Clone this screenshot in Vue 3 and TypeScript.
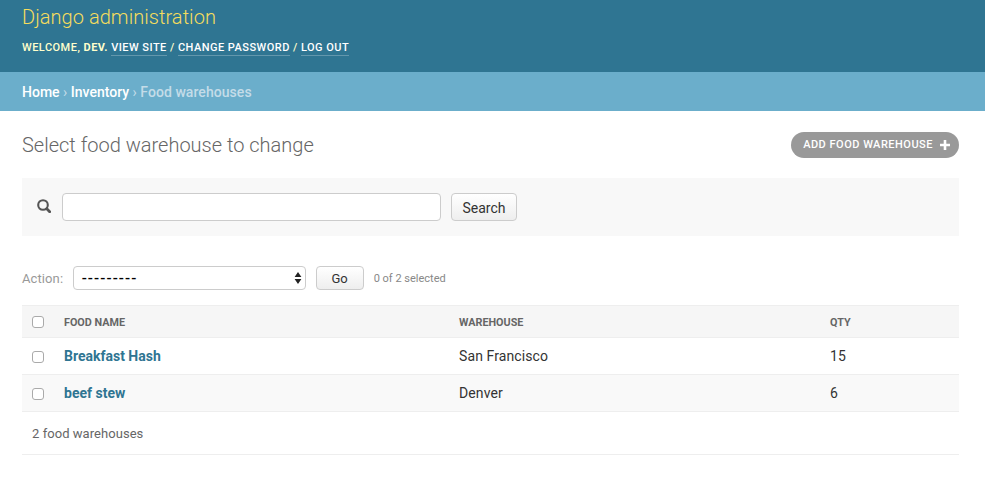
<script setup lang="ts">
interface Warehouse {
  name: string
  warehouse: string
  qty: number
}

const rows: Warehouse[] = [
  { name: 'Breakfast Hash', warehouse: 'San Francisco', qty: 15 },
  { name: 'beef stew', warehouse: 'Denver', qty: 6 },
]
</script>

<template>
  <div class="page">
    <header class="header">
      <h1 class="brand">Django administration</h1>
      <div class="tools">
        WELCOME, <strong>DEV.</strong>&nbsp;<a class="tool-link">VIEW SITE</a> / <a class="tool-link">CHANGE PASSWORD</a> / <a class="tool-link">LOG OUT</a>
      </div>
    </header>
    <nav class="crumbs">
      <a>Home</a> <span class="sep">›</span> <a>Inventory</a> <span class="sep">›</span> <span class="current">Food warehouses</span>
    </nav>
    <main class="content">
      <div class="title-row">
        <h2>Select food warehouse to change</h2>
        <a class="add-btn">
          ADD FOOD WAREHOUSE
          <svg width="10" height="10" viewBox="0 0 10 10"><path d="M3.7 0h2.6v3.7H10v2.6H6.3V10H3.7V6.3H0V3.7h3.7z" fill="#fff" /></svg>
        </a>
      </div>
      <div class="search-bar">
        <svg class="search-icon" width="14" height="14" viewBox="0 0 14 14">
          <circle cx="6" cy="6" r="4.8" fill="none" stroke="#555" stroke-width="2.1" />
          <path d="M9.8 9.8l2.9 2.9" stroke="#555" stroke-width="2.8" stroke-linecap="round" />
        </svg>
        <input class="search-input" type="text" />
        <button class="btn search-btn">Search</button>
      </div>
      <div class="actions">
        <label>Action:</label>
        <div class="select">
          <span>---------</span>
          <svg width="8" height="14" viewBox="0 0 8 14"><path d="M4 1l3.4 5H.6zM4 13L.6 8h6.8z" fill="#222" /></svg>
        </div>
        <button class="btn go-btn">Go</button>
        <span class="count">0 of 2 selected</span>
      </div>
      <table class="results">
        <thead>
          <tr>
            <th class="col-check"><span class="check" /></th>
            <th class="col-name"><span class="th-label">FOOD NAME</span></th>
            <th class="col-house"><span class="th-label">WAREHOUSE</span></th>
            <th><span class="th-label">QTY</span></th>
          </tr>
        </thead>
        <tbody>
          <tr v-for="(row, i) in rows" :key="row.name" :class="{ alt: i === 1 }">
            <td class="col-check"><span class="check check-row" /></td>
            <td class="col-name"><a class="row-link">{{ row.name }}</a></td>
            <td class="col-house">{{ row.warehouse }}</td>
            <td>{{ row.qty }}</td>
          </tr>
        </tbody>
      </table>
      <p class="paginator">2 food warehouses</p>
    </main>
  </div>
</template>

<style>
html, body {
  margin: 0;
  background: #fff;
}
</style>

<style scoped>
.page {
  font-family: Roboto, "Liberation Sans", sans-serif;
  color: #333;
  font-size: 14px;
}

.header {
  height: 72px;
  box-sizing: border-box;
  background: #2f7592;
  padding: 5px 22px 0;
}

.brand {
  margin: 0;
  font-size: 20px;
  line-height: 24px;
  font-weight: 300;
  letter-spacing: 0.05px;
  color: #f5dd5d;
}

.tools {
  margin-top: 12px;
  font-size: 11px;
  line-height: 14px;
  font-weight: 500;
  letter-spacing: 0.47px;
  color: #ffc;
}

.tools strong {
  font-weight: 700;
}

.tool-link {
  color: #fff;
  font-weight: 500;
  border-bottom: 1px solid rgba(255, 255, 255, 0.25);
  padding-bottom: 1px;
}

.crumbs {
  height: 39px;
  box-sizing: border-box;
  background: #6baecb;
  padding: 0 22px;
  display: flex;
  align-items: center;
  gap: 3.5px;
  font-size: 14px;
  color: #fff;
}

.crumbs a {
  font-weight: 500;
}

.sep {
  color: #c4dce8;
}

.current {
  color: #c4dce8;
  font-weight: 500;
  letter-spacing: 0.06px;
}

.content {
  padding: 0 26px 0 22px;
}

.title-row {
  display: flex;
  justify-content: space-between;
  align-items: center;
  height: 67px;
}

.title-row h2 {
  margin: 0;
  font-size: 20px;
  font-weight: 300;
  color: #666;
}

.add-btn {
  display: flex;
  align-items: center;
  gap: 7px;
  height: 26px;
  padding: 0 9px 0 12px;
  border-radius: 13px;
  background: #999;
  color: #fff;
  font-size: 11px;
  font-weight: 500;
  letter-spacing: 0.5px;
}

.search-bar {
  display: flex;
  align-items: center;
  background: #f8f8f8;
  height: 58px;
  padding-left: 15px;
}

.search-icon {
  margin-right: 11px;
  margin-top: -3px;
}

.search-input {
  width: 379px;
  height: 28px;
  box-sizing: border-box;
  border: 1px solid #ccc;
  border-radius: 4px;
  background: #fff;
  margin: 0 10px 0 0;
}

.btn {
  box-sizing: border-box;
  border: 1px solid #ccc;
  border-radius: 4px;
  background: linear-gradient(#fff, #eee);
  font-family: inherit;
  color: #333;
  font-size: 14px;
  padding: 0;
}

.search-btn {
  width: 66px;
  height: 28px;
  padding-top: 2px;
}

.actions {
  display: flex;
  align-items: center;
  margin-top: 30px;
  height: 24px;
  font-size: 13px;
  letter-spacing: 0.1px;
  color: #999;
}

.select {
  display: flex;
  align-items: center;
  justify-content: space-between;
  box-sizing: border-box;
  width: 233px;
  height: 24px;
  margin-left: 9.5px;
  padding: 0 3px 0 8px;
  border: 1px solid #ccc;
  border-radius: 4px;
  color: #000;
  font-size: 15px;
  font-weight: 500;
  letter-spacing: 1.1px;
}

.go-btn {
  width: 48px;
  height: 24px;
  margin-left: 10px;
  font-size: 13px;
}

.count {
  margin-left: 10px;
  font-size: 11px;
  letter-spacing: 0;
  color: #888;
}

.results {
  width: 100%;
  margin-top: 15px;
  border-collapse: collapse;
  table-layout: fixed;
}

.results th {
  height: 31px;
  padding: 0;
  text-align: left;
  background: #f6f6f6;
  border-top: 1px solid #eee;
  border-bottom: 1px solid #eee;
  font-size: 10.8px;
  font-weight: 700;
  color: #666;
}

.th-label {
  display: block;
  padding-top: 1px;
}

.results td {
  height: 36px;
  padding: 0;
  border-bottom: 1px solid #eee;
  font-size: 14px;
  letter-spacing: 0.1px;
  color: #333;
}

.alt td {
  background: #f9f9f9;
}

.col-check {
  width: 42px;
}

.col-name {
  width: 395px;
}

.col-house {
  width: 371px;
}

.check {
  display: block;
  width: 12px;
  height: 12px;
  box-sizing: border-box;
  margin-left: 10px;
  border: 1px solid #aaa;
  border-radius: 3px;
  background: #fff;
}

.check-row {
  margin-top: 2px;
}

.row-link {
  color: #2f7592;
  font-weight: 700;
  letter-spacing: 0;
}

.paginator {
  margin: 0;
  height: 43px;
  box-sizing: border-box;
  padding: 14px 0 0 10px;
  border-bottom: 1px solid #eee;
  font-size: 13px;
  letter-spacing: 0.05px;
  color: #666;
}
</style>
